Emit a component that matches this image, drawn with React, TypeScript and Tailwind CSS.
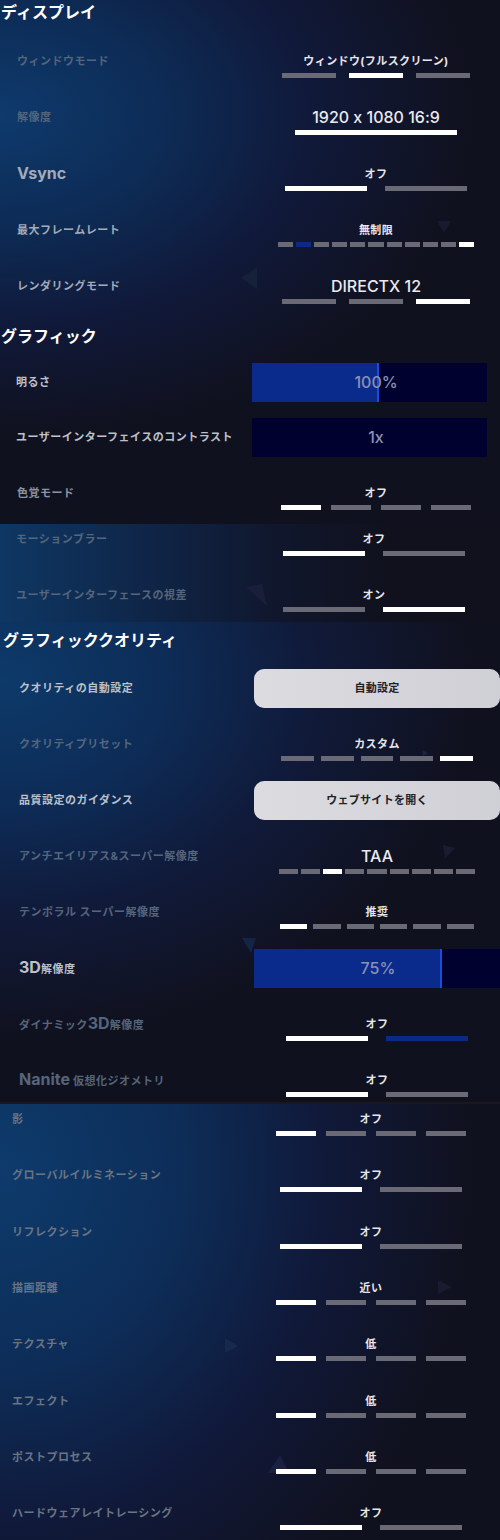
import React from 'react';

type Tone = 'dim' | 'low' | 'mid' | 'hi' | 'top';

const toneCls: Record<Tone, string> = {
  dim: 'text-[#55657b]',
  low: 'text-[#6b7483]',
  mid: 'text-[#8b93a0]',
  hi: 'text-[#a3abb8]',
  top: 'text-[#bcc1ca]',
};

type Control =
  | { kind: 'choice'; value: string; big?: boolean; pattern: string; bars: string }
  | { kind: 'slider'; value: string; box: string; fill?: string; text: string }
  | { kind: 'button'; value: string };

type Row = { label: React.ReactNode; tone: Tone; control: Control };

const Big = ({ children }: { children: React.ReactNode }) => (
  <span className="text-[16px] tracking-normal">{children}</span>
);

function Segs({ pattern, bars, big }: { pattern: string; bars: string; big?: boolean }) {
  return (
    <div className={`flex h-[5px] ${big ? 'mt-[4px]' : 'mt-[5px]'} ${bars}`}>
      {pattern.split('').map((c, i) => (
        <div
          key={i}
          className={`h-full flex-1 ${c === 'w' ? 'bg-white' : c === 'b' ? 'bg-[#0b2a88]' : 'bg-[#6a6a76]'}`}
        />
      ))}
    </div>
  );
}

function ControlView({ c }: { c: Control }) {
  if (c.kind === 'choice') {
    return (
      <div className={`flex flex-col items-center ${c.big ? 'pt-[9px]' : 'pt-[10px]'}`}>
        <div
          className={
            c.big
              ? 'text-[16px] font-medium leading-[18px] text-[#e9e9ee]'
              : 'text-[11px] font-bold leading-[14px] tracking-[0.4px] text-[#e6e6ea]'
          }
        >
          {c.value}
        </div>
        <Segs pattern={c.pattern} bars={c.bars} big={c.big} />
      </div>
    );
  }
  if (c.kind === 'slider') {
    return (
      <div className={`relative h-[39px] bg-[#00012f] ${c.box}`}>
        {c.fill && <div className={`h-full border-r-2 border-[#1b4ddc] bg-[#0a2a8c] ${c.fill}`} />}
        <div
          className={`absolute inset-0 flex items-center justify-center text-[16px] font-medium text-[#8c90b2] ${c.text}`}
        >
          {c.value}
        </div>
      </div>
    );
  }
  return (
    <div className="flex h-[39px] w-full items-center justify-center rounded-[10px] bg-[linear-gradient(90deg,#dcdce0,#cfcfd6)] text-[11px] font-bold tracking-[0.3px] text-[#202027]">
      {c.value}
    </div>
  );
}

function SettingRow({ row, labelCls, h, extra = '' }: { row: Row; labelCls: string; h: string; extra?: string }) {
  return (
    <div className={`flex items-center ${h} ${extra}`}>
      <div
        className={`shrink-0 text-[11px] font-bold leading-[16px] tracking-[0.5px] ${labelCls} ${toneCls[row.tone]}`}
      >
        {row.label}
      </div>
      <div className="flex min-w-0 flex-1 flex-col items-center">
        <ControlView c={row.control} />
      </div>
    </div>
  );
}

const two = 'w-[182px] gap-[18px]';
const three = 'w-[188px] gap-[13px]';
const four = 'w-[190px] gap-[10px]';

const displayRows: Row[] = [
  { label: 'ウィンドウモード', tone: 'dim', control: { kind: 'choice', value: 'ウィンドウ(フルスクリーン)', pattern: 'gwg', bars: three } },
  { label: '解像度', tone: 'dim', control: { kind: 'choice', value: '1920 x 1080 16:9', big: true, pattern: 'w', bars: 'w-[162px]' } },
  { label: <Big>Vsync</Big>, tone: 'hi', control: { kind: 'choice', value: 'オフ', pattern: 'wg', bars: two } },
  { label: '最大フレームレート', tone: 'hi', control: { kind: 'choice', value: '無制限', pattern: 'gbggggggggw', bars: 'w-[196px] gap-[3px]' } },
  { label: 'レンダリングモード', tone: 'hi', control: { kind: 'choice', value: 'DIRECTX 12', big: true, pattern: 'ggw', bars: three } },
];

const brightness: Row = { label: '明るさ', tone: 'top', control: { kind: 'slider', value: '100%', box: 'w-[235px] self-start', fill: 'w-[127px]', text: 'pl-[13px]' } };
const contrast: Row = { label: 'ユーザーインターフェイスのコントラスト', tone: 'top', control: { kind: 'slider', value: '1x', box: 'w-[235px] self-start', text: 'pl-[13px]' } };
const colorMode: Row = { label: '色覚モード', tone: 'mid', control: { kind: 'choice', value: 'オフ', pattern: 'wggg', bars: four } };

const panelBRows: Row[] = [
  { label: 'モーションブラー', tone: 'dim', control: { kind: 'choice', value: 'オフ', pattern: 'wg', bars: two } },
  { label: 'ユーザーインターフェースの視差', tone: 'dim', control: { kind: 'choice', value: 'オン', pattern: 'gw', bars: two } },
];

const qualityRows: Row[] = [
  { label: 'クオリティの自動設定', tone: 'top', control: { kind: 'button', value: '自動設定' } },
  { label: 'クオリティプリセット', tone: 'dim', control: { kind: 'choice', value: 'カスタム', pattern: 'ggggw', bars: 'w-[192px] gap-[7px]' } },
  { label: '品質設定のガイダンス', tone: 'top', control: { kind: 'button', value: 'ウェブサイトを開く' } },
  { label: 'アンチエイリアス&スーパー解像度', tone: 'dim', control: { kind: 'choice', value: 'TAA', big: true, pattern: 'ggwgggggg', bars: 'w-[197px] gap-[3px]' } },
  { label: 'テンポラル スーパー解像度', tone: 'dim', control: { kind: 'choice', value: '推奨', pattern: 'wggggg', bars: 'w-[194px] gap-[6px]' } },
  { label: <><Big>3D</Big>解像度</>, tone: 'top', control: { kind: 'slider', value: '75%', box: 'w-full', fill: 'w-[188px]', text: 'pl-[2px]' } },
  { label: <>ダイナミック<Big>3D</Big>解像度</>, tone: 'dim', control: { kind: 'choice', value: 'オフ', pattern: 'wb', bars: two } },
  { label: <><Big>Nanite</Big> 仮想化ジオメトリ</>, tone: 'dim', control: { kind: 'choice', value: 'オフ', pattern: 'wg', bars: two } },
];

const detailRows: Row[] = [
  { label: '影', tone: 'low', control: { kind: 'choice', value: 'オフ', pattern: 'wggg', bars: four } },
  { label: 'グローバルイルミネーション', tone: 'low', control: { kind: 'choice', value: 'オフ', pattern: 'wg', bars: two } },
  { label: 'リフレクション', tone: 'low', control: { kind: 'choice', value: 'オフ', pattern: 'wg', bars: two } },
  { label: '描画距離', tone: 'low', control: { kind: 'choice', value: '近い', pattern: 'wggg', bars: four } },
  { label: 'テクスチャ', tone: 'low', control: { kind: 'choice', value: '低', pattern: 'wggg', bars: four } },
  { label: 'エフェクト', tone: 'low', control: { kind: 'choice', value: '低', pattern: 'wggg', bars: four } },
  { label: 'ポストプロセス', tone: 'low', control: { kind: 'choice', value: '低', pattern: 'wggg', bars: four } },
  { label: 'ハードウェアレイトレーシング', tone: 'low', control: { kind: 'choice', value: 'オフ', pattern: 'wg', bars: two } },
];

// faint background shards, coordinates relative to each panel
function Shards({ polys }: { polys: { p: string; c: string }[] }) {
  return (
    <svg className="pointer-events-none absolute inset-0 h-full w-full" aria-hidden>
      {polys.map((s, i) => (
        <polygon key={i} points={s.p} fill={s.c} />
      ))}
    </svg>
  );
}

export default function App() {
  return (
    <div className="w-[500px] bg-[#10111d] font-['Inter','Noto_Sans_CJK_JP',sans-serif] [font-feature-settings:'calt'_0]">
      {/* display + graphics */}
      <div className="relative h-[524px] overflow-hidden bg-[radial-gradient(95%_62%_at_0%_22%,#0e3a6c_0%,#0d2b55_35%,#10193a_65%,#10111e_100%)]">
        <Shards
          polys={[
            { p: '437,221 451,221 444,233', c: '#181b30' },
            { p: '257,267 241,278 257,289', c: '#15203a' },
          ]}
        />
        <div className="relative">
          <div className="h-[33px] pl-[1px] text-[16px] font-bold leading-[24px] text-white">ディスプレイ</div>
          {displayRows.map((r, i) => (
            <SettingRow key={i} row={r} labelCls="w-[252px] pl-[17px]" h="h-[56.25px]" />
          ))}
          <div className="h-[41px] pl-[1px] pt-[10px] text-[16px] font-bold leading-[24px] text-white">グラフィック</div>
          <SettingRow row={brightness} labelCls="w-[252px] pl-[16px]" h="h-[54px]" />
          <SettingRow row={contrast} labelCls="w-[252px] pl-[16px]" h="h-[56px]" />
          <SettingRow row={colorMode} labelCls="w-[252px] pl-[17px]" h="h-[56px]" />
        </div>
      </div>

      {/* motion blur / parallax */}
      <div className="relative h-[98px] overflow-hidden bg-[linear-gradient(90deg,#0e3763_0%,#0f2649_28%,#10172d_55%,#10111d_78%)]">
        <Shards polys={[{ p: '246,63 262,60 267,82', c: '#191f3a' }]} />
        <div className="relative">
          {panelBRows.map((r, i) => (
            <SettingRow key={i} row={r} labelCls="w-[248px] pl-[16px]" h="h-[56px]" extra={i === 0 ? 'mt-[-13px]' : ''} />
          ))}
        </div>
      </div>

      {/* graphics quality */}
      <div className="relative h-[480px] overflow-hidden bg-[radial-gradient(95%_75%_at_0%_12%,#0d3a6a_0%,#0d2c57_35%,#101a3a_65%,#10111e_100%)]">
        <Shards
          polys={[
            { p: '443,223 455,226 445,236', c: '#1a1d31' },
            { p: '242,316 256,316 251,331', c: '#152443' },
            { p: '422,128 428,131 423,134', c: '#172645' },
          ]}
        />
        <div className="relative">
          <div className="h-[38px] pl-[3px] pt-[6px] text-[16px] font-bold leading-[24px] text-white">グラフィッククオリティ</div>
          {qualityRows.map((r, i) => (
            <SettingRow key={i} row={r} labelCls="w-[254px] pl-[19px]" h="h-[56px]" />
          ))}
        </div>
      </div>

      <div className="h-[2px] bg-[#19191d]" />

      {/* details */}
      <div className="relative h-[436px] overflow-hidden bg-[radial-gradient(95%_120%_at_0%_15%,#0d3b6c_0%,#0d2d58_38%,#10193a_68%,#10111e_100%)]">
        <Shards
          polys={[
            { p: '225,234 238,242 225,249', c: '#182a4c' },
            { p: '438,176 452,183 438,190', c: '#191c30' },
            { p: '268,369 289,369 280,351', c: '#1a2040' },
          ]}
        />
        <div className="relative">
          {detailRows.map((r, i) => (
            <SettingRow key={i} row={r} labelCls="w-[242px] pl-[12px]" h="h-[56.3px]" extra={i === 0 ? 'mt-[-13px]' : ''} />
          ))}
        </div>
      </div>
    </div>
  );
}
